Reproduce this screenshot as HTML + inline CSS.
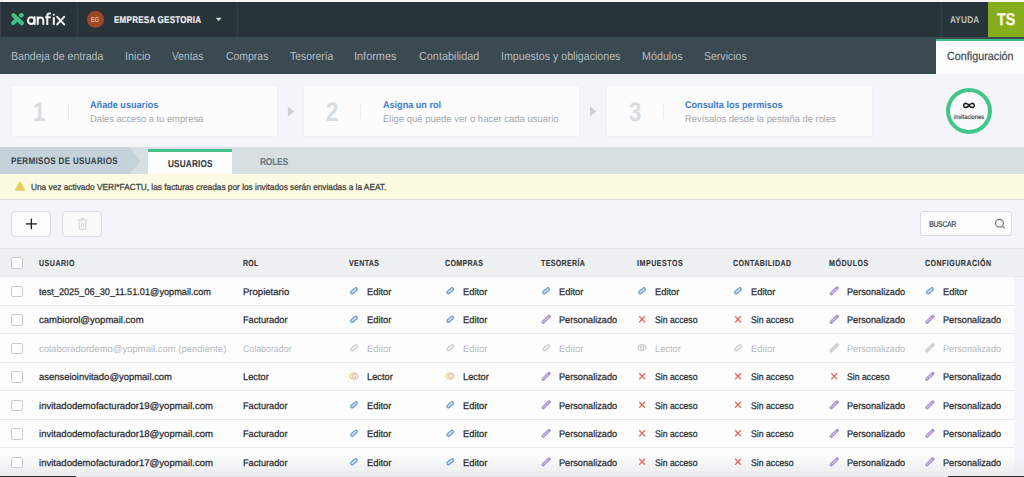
<!DOCTYPE html>
<html><head><meta charset="utf-8"><style>
html,body{margin:0;padding:0;}
body{width:1024px;height:477px;overflow:hidden;position:relative;background:#f4f4f8;font-family:'Liberation Sans', sans-serif;text-rendering:geometricPrecision;}
div{-webkit-text-stroke:0.25px currentColor;}
</style></head><body>
<div style="position:absolute;left:0px;top:0px;width:1024px;height:2px;background:#f6f6f7;"></div>
<div style="position:absolute;left:0px;top:2px;width:1024px;height:34.5px;background:#29333a;"></div>
<div style="position:absolute;left:0px;top:2px;width:1px;height:34.5px;background:#3a4349;"></div>
<svg style="position:absolute;left:0;top:0;overflow:visible" width="1024" height="477" viewBox="0 0 1024 477"><g stroke="#3ec586" stroke-width="4.1" stroke-linecap="round" fill="none"><line x1="13.5" y1="15.2" x2="21.9" y2="23.3"/><line x1="13.1" y1="23.0" x2="17.6" y2="19.0"/></g><circle cx="21.3" cy="15.3" r="2.35" fill="#3ec586"/></svg>
<svg style="position:absolute;left:0;top:0;overflow:visible" width="1024" height="477" viewBox="0 0 1024 477"><g stroke="#f2f4f4" stroke-width="2" fill="none" stroke-linecap="butt"><circle cx="31.25" cy="20.6" r="3.3"/><line x1="34.6" y1="16.3" x2="34.6" y2="24.9"/><path d="M37.7 24.8 V16.4 M37.7 20.2 A2.8 2.8 0 0 1 43.3 20.2 V24.8"/><path d="M47.3 24.9 V15.7 A2.1 2.1 0 0 1 49.4 13.6 H50.9 M45.2 17.3 H50.7"/><line x1="53.8" y1="17.2" x2="53.8" y2="24.8"/><path d="M57.2 16.8 L64.1 24.4 M64.1 16.8 L57.2 24.4" stroke-linecap="round"/></g><circle cx="53.8" cy="14.7" r="1.05" fill="#f2f4f4"/></svg>
<div style="position:absolute;left:77px;top:2px;width:1px;height:34.5px;background:#343e45;"></div>
<div style="position:absolute;left:86.9px;top:11px;width:16.7px;height:16.7px;border-radius:50%;background:#9f4529"></div>
<div style="position:absolute;left:91.20px;top:16px;font-size:7.2px;line-height:7.2px;font-weight:400;color:#f3e4dd;white-space:pre;transform:scaleX(0.7892);transform-origin:0 0;-webkit-text-stroke:0;">EG</div>
<div style="position:absolute;left:113.60px;top:16px;font-size:9.8px;line-height:9.8px;font-weight:700;color:#eef0f1;white-space:pre;letter-spacing:0.295px;transform:scaleX(0.8200);transform-origin:0 0;-webkit-text-stroke:0;-webkit-text-stroke:0.2px currentColor;">EMPRESA GESTORIA</div>
<svg style="position:absolute;left:0;top:0;overflow:visible" width="1024" height="477" viewBox="0 0 1024 477"><path d="M215.6 17.7 L221.7 17.7 L218.65 21.2 Z" fill="#c8ccd0"/></svg>
<div style="position:absolute;left:237px;top:2px;width:1px;height:34.5px;background:#343e45;"></div>
<div style="position:absolute;left:941px;top:2px;width:1px;height:34.5px;background:#343e45;"></div>
<div style="position:absolute;left:949.80px;top:16px;font-size:9.7px;line-height:9.7px;font-weight:700;color:#bcc1c4;white-space:pre;letter-spacing:0.198px;transform:scaleX(0.8500);transform-origin:0 0;-webkit-text-stroke:0;">AYUDA</div>
<div style="position:absolute;left:988px;top:2px;width:36px;height:34.8px;background:#86ad1c;"></div>
<div style="position:absolute;left:997.00px;top:11px;font-size:17px;line-height:17px;font-weight:700;color:#fcf9e2;white-space:pre;transform:scaleX(0.8374);transform-origin:0 0;-webkit-text-stroke:0;-webkit-text-stroke:0.3px currentColor;">TS</div>
<div style="position:absolute;left:0px;top:36.5px;width:1024px;height:37.5px;background:#3b4950;"></div>
<div style="position:absolute;left:10.70px;top:51px;font-size:11.6px;line-height:11.6px;font-weight:400;color:#b4bcc0;white-space:pre;letter-spacing:0.000px;transform:scaleX(0.9129);transform-origin:0 0;-webkit-text-stroke:0;">Bandeja de entrada</div>
<div style="position:absolute;left:125.00px;top:51px;font-size:11.6px;line-height:11.6px;font-weight:400;color:#b4bcc0;white-space:pre;letter-spacing:0.000px;transform:scaleX(0.9380);transform-origin:0 0;-webkit-text-stroke:0;">Inicio</div>
<div style="position:absolute;left:172.30px;top:51px;font-size:11.6px;line-height:11.6px;font-weight:400;color:#b4bcc0;white-space:pre;letter-spacing:0.000px;transform:scaleX(0.8825);transform-origin:0 0;-webkit-text-stroke:0;">Ventas</div>
<div style="position:absolute;left:225.60px;top:51px;font-size:11.6px;line-height:11.6px;font-weight:400;color:#b4bcc0;white-space:pre;letter-spacing:0.000px;transform:scaleX(0.9012);transform-origin:0 0;-webkit-text-stroke:0;">Compras</div>
<div style="position:absolute;left:289.90px;top:51px;font-size:11.6px;line-height:11.6px;font-weight:400;color:#b4bcc0;white-space:pre;letter-spacing:0.000px;transform:scaleX(0.8960);transform-origin:0 0;-webkit-text-stroke:0;">Tesorería</div>
<div style="position:absolute;left:354.40px;top:51px;font-size:11.6px;line-height:11.6px;font-weight:400;color:#b4bcc0;white-space:pre;letter-spacing:0.000px;transform:scaleX(0.9422);transform-origin:0 0;-webkit-text-stroke:0;">Informes</div>
<div style="position:absolute;left:418.70px;top:51px;font-size:11.6px;line-height:11.6px;font-weight:400;color:#b4bcc0;white-space:pre;letter-spacing:0.000px;transform:scaleX(0.9353);transform-origin:0 0;-webkit-text-stroke:0;">Contabilidad</div>
<div style="position:absolute;left:501.10px;top:51px;font-size:11.6px;line-height:11.6px;font-weight:400;color:#b4bcc0;white-space:pre;letter-spacing:0.000px;transform:scaleX(0.9171);transform-origin:0 0;-webkit-text-stroke:0;">Impuestos y obligaciones</div>
<div style="position:absolute;left:642.40px;top:51px;font-size:11.6px;line-height:11.6px;font-weight:400;color:#b4bcc0;white-space:pre;letter-spacing:0.000px;transform:scaleX(0.9263);transform-origin:0 0;-webkit-text-stroke:0;">Módulos</div>
<div style="position:absolute;left:704.30px;top:51px;font-size:11.6px;line-height:11.6px;font-weight:400;color:#b4bcc0;white-space:pre;letter-spacing:0.000px;transform:scaleX(0.9076);transform-origin:0 0;-webkit-text-stroke:0;">Servicios</div>
<div style="position:absolute;left:935.7px;top:38.9px;width:88.3px;height:35.1px;background:#fdfdfd;"></div>
<div style="position:absolute;left:935.7px;top:38.9px;width:88.3px;height:2.6px;background:#3dbe87;"></div>
<div style="position:absolute;left:946.70px;top:51px;font-size:11.7px;line-height:11.7px;font-weight:400;color:#495156;white-space:pre;letter-spacing:0.000px;transform:scaleX(0.9234);transform-origin:0 0;">Configuración</div>
<div style="position:absolute;left:0px;top:74px;width:1024px;height:403px;background:#f5f5f9;"></div>
<div style="position:absolute;left:11.5px;top:86px;width:265.5px;height:50.2px;background:#fcfcfd;border-radius:2px;box-shadow:0 0 0 1px #f1f1f4"></div>
<div style="position:absolute;left:33.00px;top:99px;font-size:27px;line-height:27px;font-weight:700;color:#d7dde1;white-space:pre;transform:scaleX(0.8249);transform-origin:0 0;-webkit-text-stroke:0;">1</div>
<div style="position:absolute;left:67.5px;top:103.5px;height:15px;border-left:1px dotted #d9dde0"></div>
<div style="position:absolute;left:89.70px;top:101px;font-size:9.7px;line-height:9.7px;font-weight:700;color:#3d7bc8;white-space:pre;letter-spacing:0.000px;transform:scaleX(0.9396);transform-origin:0 0;-webkit-text-stroke:0;">Añade usuarios</div>
<div style="position:absolute;left:89.70px;top:115px;font-size:9.7px;line-height:9.7px;font-weight:400;color:#a4a8ac;white-space:pre;letter-spacing:0.000px;transform:scaleX(0.9652);transform-origin:0 0;-webkit-text-stroke:0;">Dales acceso a tu empresa</div>
<div style="position:absolute;left:304.4px;top:86px;width:274.30000000000007px;height:50.2px;background:#fcfcfd;border-radius:2px;box-shadow:0 0 0 1px #f1f1f4"></div>
<div style="position:absolute;left:325.90px;top:99px;font-size:27px;line-height:27px;font-weight:700;color:#d7dde1;white-space:pre;transform:scaleX(0.8249);transform-origin:0 0;-webkit-text-stroke:0;">2</div>
<div style="position:absolute;left:360.4px;top:103.5px;height:15px;border-left:1px dotted #d9dde0"></div>
<div style="position:absolute;left:382.60px;top:101px;font-size:9.7px;line-height:9.7px;font-weight:700;color:#3d7bc8;white-space:pre;letter-spacing:0.000px;transform:scaleX(0.9369);transform-origin:0 0;-webkit-text-stroke:0;">Asigna un rol</div>
<div style="position:absolute;left:382.60px;top:115px;font-size:9.7px;line-height:9.7px;font-weight:400;color:#a4a8ac;white-space:pre;letter-spacing:0.000px;transform:scaleX(0.9786);transform-origin:0 0;-webkit-text-stroke:0;">Elige qué puede ver o hacer cada usuario</div>
<div style="position:absolute;left:607.2px;top:86px;width:264.79999999999995px;height:50.2px;background:#fcfcfd;border-radius:2px;box-shadow:0 0 0 1px #f1f1f4"></div>
<div style="position:absolute;left:628.70px;top:99px;font-size:27px;line-height:27px;font-weight:700;color:#d7dde1;white-space:pre;transform:scaleX(0.8249);transform-origin:0 0;-webkit-text-stroke:0;">3</div>
<div style="position:absolute;left:663.2px;top:103.5px;height:15px;border-left:1px dotted #d9dde0"></div>
<div style="position:absolute;left:685.40px;top:101px;font-size:9.7px;line-height:9.7px;font-weight:700;color:#3d7bc8;white-space:pre;letter-spacing:0.000px;transform:scaleX(0.9383);transform-origin:0 0;-webkit-text-stroke:0;">Consulta los permisos</div>
<div style="position:absolute;left:685.40px;top:115px;font-size:9.7px;line-height:9.7px;font-weight:400;color:#a4a8ac;white-space:pre;letter-spacing:0.000px;transform:scaleX(0.9655);transform-origin:0 0;-webkit-text-stroke:0;">Revísalos desde la pestaña de roles</div>
<svg style="position:absolute;left:0;top:0;overflow:visible" width="1024" height="477" viewBox="0 0 1024 477"><path d="M287.9 106.4 L294.2 111.5 L287.9 116.6 Z" fill="#cbd0d4"/><path d="M590 106.4 L596.3 111.5 L590 116.6 Z" fill="#cbd0d4"/></svg>
<div style="position:absolute;left:945.7px;top:87.8px;width:38.5px;height:38.3px;border:4px solid #40c68a;border-radius:50%;background:#fafafc"></div>
<svg style="position:absolute;left:0;top:0;overflow:visible" width="1024" height="477" viewBox="0 0 1024 477"><path d="M969 105.4 C968 103.2 963.7 102.3 963.7 105.4 C963.7 108.5 968 107.6 969 105.4 C970 103.2 974.3 102.3 974.3 105.4 C974.3 108.5 970 107.6 969 105.4 Z" fill="none" stroke="#1e1e1e" stroke-width="1.55"/></svg>
<div style="position:absolute;left:953.90px;top:115px;font-size:6.5px;line-height:6.5px;font-weight:400;color:#222;white-space:pre;transform:scaleX(0.8832);transform-origin:0 0;-webkit-text-stroke:0.1px currentColor;">invitaciones</div>
<div style="position:absolute;left:0px;top:147.3px;width:1024px;height:26.7px;background:#d8dfe3;"></div>
<svg style="position:absolute;left:0;top:0;overflow:visible" width="1024" height="477" viewBox="0 0 1024 477"><path d="M0 147.3 L129.7 147.3 L140.6 160.65 L129.7 174 L0 174 Z" fill="#c5d2d9"/></svg>
<div style="position:absolute;left:10.90px;top:157px;font-size:9.5px;line-height:9.5px;font-weight:700;color:#343e45;white-space:pre;letter-spacing:0.349px;transform:scaleX(0.8500);transform-origin:0 0;-webkit-text-stroke:0;">PERMISOS DE USUARIOS</div>
<div style="position:absolute;left:147.8px;top:149.4px;width:84.1px;height:24.6px;background:#fdfdfd;"></div>
<div style="position:absolute;left:147.8px;top:149.4px;width:84.1px;height:2.3px;background:#44c08c;"></div>
<div style="position:absolute;left:167.80px;top:160px;font-size:10px;line-height:10px;font-weight:700;color:#30383e;white-space:pre;letter-spacing:0.210px;transform:scaleX(0.8200);transform-origin:0 0;-webkit-text-stroke:0;-webkit-text-stroke:0.1px currentColor;">USUARIOS</div>
<div style="position:absolute;left:260.00px;top:158px;font-size:10px;line-height:10px;font-weight:700;color:#6e7b84;white-space:pre;letter-spacing:-0.349px;transform:scaleX(0.8500);transform-origin:0 0;-webkit-text-stroke:0;-webkit-text-stroke:0.15px currentColor;">ROLES</div>
<div style="position:absolute;left:0px;top:174px;width:1024px;height:25px;background:#fcfbe2;"></div>
<div style="position:absolute;left:0px;top:198.5px;width:1024px;height:1px;background:#dfded3;"></div>
<svg style="position:absolute;left:0;top:0;overflow:visible" width="1024" height="477" viewBox="0 0 1024 477"><path d="M19.95 182.7 L23.8 189.8 L16.1 189.8 Z" fill="#e6cc58" stroke="#e6cc58" stroke-width="2" stroke-linejoin="round"/></svg>
<div style="position:absolute;left:31.25px;top:183px;font-size:8.8px;line-height:8.8px;font-weight:400;color:#3a3a3a;white-space:pre;transform:scaleX(0.9429);transform-origin:0 0;">Una vez activado VERI*FACTU, las facturas creadas por los invitados serán enviadas a la AEAT.</div>
<div style="position:absolute;left:11.3px;top:211px;width:37.4px;height:23.7px;border:1px solid #dcdcdf;border-radius:4px;background:#fdfdfd"></div>
<svg style="position:absolute;left:0;top:0;overflow:visible" width="1024" height="477" viewBox="0 0 1024 477"><g stroke="#222" stroke-width="1.35"><line x1="25.8" y1="223.9" x2="36.9" y2="223.9"/><line x1="31.35" y1="218.6" x2="31.35" y2="229.2"/></g></svg>
<div style="position:absolute;left:62.3px;top:211px;width:37.8px;height:23.7px;border:1px solid #dcdcdf;border-radius:4px;background:#fbfbfc"></div>
<svg style="position:absolute;left:0;top:0;overflow:visible" width="1024" height="477" viewBox="0 0 1024 477"><g fill="none" stroke="#d9d9dc" stroke-width="1.2"><line x1="77.5" y1="220.1" x2="87.5" y2="220.1"/><path d="M80.6 219.9 Q80.8 218.3 82.5 218.3 Q84.2 218.3 84.4 219.9"/><path d="M78.9 220.6 L79.3 228.2 Q79.4 229.3 80.6 229.3 L84.4 229.3 Q85.6 229.3 85.7 228.2 L86.1 220.6"/><line x1="81.4" y1="222.6" x2="81.4" y2="227.2"/><line x1="83.6" y1="222.6" x2="83.6" y2="227.2"/></g></svg>
<div style="position:absolute;left:919.5px;top:211.3px;width:90.8px;height:23.2px;border:1px solid #dcdcdf;border-radius:3px;background:#fdfdfd"></div>
<div style="position:absolute;left:929.20px;top:220px;font-size:8.4px;line-height:8.4px;font-weight:700;color:#5a5e62;white-space:pre;letter-spacing:-0.719px;transform:scaleX(0.8500);transform-origin:0 0;-webkit-text-stroke:0;">BUSCAR</div>
<svg style="position:absolute;left:0;top:0;overflow:visible" width="1024" height="477" viewBox="0 0 1024 477"><g fill="none" stroke="#74797d" stroke-width="1.2"><circle cx="999.5" cy="223.2" r="3.9"/><line x1="1002.4" y1="226.1" x2="1004.7" y2="228.4"/></g></svg>
<div style="position:absolute;left:0px;top:248px;width:1024px;height:28.5px;background:#eff0f2;"></div>
<div style="position:absolute;left:0px;top:248px;width:1024px;height:1px;background:#e6e7ea;"></div>
<div style="position:absolute;left:11.2px;top:257.3px;width:9.6px;height:9.6px;border:1px solid #cbcbcd;border-radius:2px;background:#fff"></div>
<div style="position:absolute;left:39.40px;top:259px;font-size:8.8px;line-height:8.8px;font-weight:700;color:#34383c;white-space:pre;letter-spacing:0.633px;transform:scaleX(0.8000);transform-origin:0 0;-webkit-text-stroke:0;-webkit-text-stroke:0.15px currentColor;">USUARIO</div>
<div style="position:absolute;left:242.70px;top:259px;font-size:8.8px;line-height:8.8px;font-weight:700;color:#34383c;white-space:pre;letter-spacing:0.211px;transform:scaleX(0.8000);transform-origin:0 0;-webkit-text-stroke:0;-webkit-text-stroke:0.15px currentColor;">ROL</div>
<div style="position:absolute;left:348.60px;top:259px;font-size:8.8px;line-height:8.8px;font-weight:700;color:#34383c;white-space:pre;letter-spacing:0.494px;transform:scaleX(0.8000);transform-origin:0 0;-webkit-text-stroke:0;-webkit-text-stroke:0.15px currentColor;">VENTAS</div>
<div style="position:absolute;left:444.80px;top:259px;font-size:8.8px;line-height:8.8px;font-weight:700;color:#34383c;white-space:pre;letter-spacing:0.401px;transform:scaleX(0.8000);transform-origin:0 0;-webkit-text-stroke:0;-webkit-text-stroke:0.15px currentColor;">COMPRAS</div>
<div style="position:absolute;left:540.70px;top:259px;font-size:8.8px;line-height:8.8px;font-weight:700;color:#34383c;white-space:pre;letter-spacing:0.443px;transform:scaleX(0.8000);transform-origin:0 0;-webkit-text-stroke:0;-webkit-text-stroke:0.15px currentColor;">TESORERÍA</div>
<div style="position:absolute;left:636.70px;top:259px;font-size:8.8px;line-height:8.8px;font-weight:700;color:#34383c;white-space:pre;letter-spacing:0.684px;transform:scaleX(0.8000);transform-origin:0 0;-webkit-text-stroke:0;-webkit-text-stroke:0.15px currentColor;">IMPUESTOS</div>
<div style="position:absolute;left:732.60px;top:259px;font-size:8.8px;line-height:8.8px;font-weight:700;color:#34383c;white-space:pre;letter-spacing:0.575px;transform:scaleX(0.8000);transform-origin:0 0;-webkit-text-stroke:0;-webkit-text-stroke:0.15px currentColor;">CONTABILIDAD</div>
<div style="position:absolute;left:828.80px;top:259px;font-size:8.8px;line-height:8.8px;font-weight:700;color:#34383c;white-space:pre;letter-spacing:0.693px;transform:scaleX(0.8000);transform-origin:0 0;-webkit-text-stroke:0;-webkit-text-stroke:0.15px currentColor;">MÓDULOS</div>
<div style="position:absolute;left:924.50px;top:259px;font-size:8.8px;line-height:8.8px;font-weight:700;color:#34383c;white-space:pre;letter-spacing:0.603px;transform:scaleX(0.8000);transform-origin:0 0;-webkit-text-stroke:0;-webkit-text-stroke:0.15px currentColor;">CONFIGURACIÓN</div>
<div style="position:absolute;left:0px;top:276.5px;width:1014.3px;height:28.5px;background:#fdfdfd;"></div>
<div style="position:absolute;left:0px;top:305.0px;width:1014.3px;height:28.5px;background:#fdfdfd;"></div>
<div style="position:absolute;left:0px;top:333.5px;width:1014.3px;height:28.5px;background:#fdfdfd;"></div>
<div style="position:absolute;left:0px;top:362.0px;width:1014.3px;height:28.5px;background:#fdfdfd;"></div>
<div style="position:absolute;left:0px;top:390.5px;width:1014.3px;height:28.5px;background:#fdfdfd;"></div>
<div style="position:absolute;left:0px;top:419.0px;width:1014.3px;height:28.5px;background:#fdfdfd;"></div>
<div style="position:absolute;left:0px;top:447.5px;width:1014.3px;height:28.5px;background:#fdfdfd;"></div>
<div style="position:absolute;left:0px;top:276px;width:1024px;height:1px;background:#e7e8eb;"></div>
<div style="position:absolute;left:0px;top:305px;width:1014.3px;height:1px;background:#e7e8eb;"></div>
<div style="position:absolute;left:0px;top:333px;width:1014.3px;height:1px;background:#e7e8eb;"></div>
<div style="position:absolute;left:0px;top:362px;width:1014.3px;height:1px;background:#e7e8eb;"></div>
<div style="position:absolute;left:0px;top:390px;width:1014.3px;height:1px;background:#e7e8eb;"></div>
<div style="position:absolute;left:0px;top:419px;width:1014.3px;height:1px;background:#e7e8eb;"></div>
<div style="position:absolute;left:0px;top:447px;width:1014.3px;height:1px;background:#e7e8eb;"></div>
<div style="position:absolute;left:0;top:454px;width:1024px;height:23px;background:linear-gradient(to bottom, rgba(228,229,233,0) 0%, rgba(228,229,233,0.75) 100%)"></div>
<div style="position:absolute;left:0px;top:476px;width:1024px;height:1px;background:#e2e2e5;"></div>
<div style="position:absolute;left:11.2px;top:285.7px;width:9.6px;height:9.6px;border:1px solid #cbcbcd;border-radius:2px;background:#fff"></div>
<div style="position:absolute;left:39.20px;top:288px;font-size:9.6px;line-height:9.6px;font-weight:400;color:#2b2c2e;white-space:pre;letter-spacing:0.000px;transform:scaleX(0.9565);transform-origin:0 0;">test_2025_06_30_11.51.01@yopmail.com</div>
<div style="position:absolute;left:242.70px;top:288px;font-size:9.6px;line-height:9.6px;font-weight:400;color:#2b2c2e;white-space:pre;letter-spacing:0.000px;transform:scaleX(0.9956);transform-origin:0 0;">Propietario</div>
<div style="position:absolute;left:367.10px;top:288px;font-size:9.6px;line-height:9.6px;font-weight:400;color:#2b2c2e;white-space:pre;letter-spacing:0.000px;transform:scaleX(0.9736);transform-origin:0 0;">Editor</div>
<div style="position:absolute;left:463.30px;top:288px;font-size:9.6px;line-height:9.6px;font-weight:400;color:#2b2c2e;white-space:pre;letter-spacing:0.000px;transform:scaleX(0.9736);transform-origin:0 0;">Editor</div>
<div style="position:absolute;left:559.20px;top:288px;font-size:9.6px;line-height:9.6px;font-weight:400;color:#2b2c2e;white-space:pre;letter-spacing:0.000px;transform:scaleX(0.9736);transform-origin:0 0;">Editor</div>
<div style="position:absolute;left:655.20px;top:288px;font-size:9.6px;line-height:9.6px;font-weight:400;color:#2b2c2e;white-space:pre;letter-spacing:0.000px;transform:scaleX(0.9736);transform-origin:0 0;">Editor</div>
<div style="position:absolute;left:751.10px;top:288px;font-size:9.6px;line-height:9.6px;font-weight:400;color:#2b2c2e;white-space:pre;letter-spacing:0.000px;transform:scaleX(0.9736);transform-origin:0 0;">Editor</div>
<div style="position:absolute;left:847.30px;top:288px;font-size:9.6px;line-height:9.6px;font-weight:400;color:#2b2c2e;white-space:pre;letter-spacing:0.000px;transform:scaleX(0.9554);transform-origin:0 0;">Personalizado</div>
<div style="position:absolute;left:943.00px;top:288px;font-size:9.6px;line-height:9.6px;font-weight:400;color:#2b2c2e;white-space:pre;letter-spacing:0.000px;transform:scaleX(0.9736);transform-origin:0 0;">Editor</div>
<div style="position:absolute;left:11.2px;top:314.2px;width:9.6px;height:9.6px;border:1px solid #cbcbcd;border-radius:2px;background:#fff"></div>
<div style="position:absolute;left:39.20px;top:316px;font-size:9.6px;line-height:9.6px;font-weight:400;color:#2b2c2e;white-space:pre;letter-spacing:0.000px;transform:scaleX(0.9944);transform-origin:0 0;">cambiorol@yopmail.com</div>
<div style="position:absolute;left:242.70px;top:316px;font-size:9.6px;line-height:9.6px;font-weight:400;color:#2b2c2e;white-space:pre;letter-spacing:0.000px;transform:scaleX(0.9592);transform-origin:0 0;">Facturador</div>
<div style="position:absolute;left:367.10px;top:316px;font-size:9.6px;line-height:9.6px;font-weight:400;color:#2b2c2e;white-space:pre;letter-spacing:0.000px;transform:scaleX(0.9736);transform-origin:0 0;">Editor</div>
<div style="position:absolute;left:463.30px;top:316px;font-size:9.6px;line-height:9.6px;font-weight:400;color:#2b2c2e;white-space:pre;letter-spacing:0.000px;transform:scaleX(0.9736);transform-origin:0 0;">Editor</div>
<div style="position:absolute;left:559.20px;top:316px;font-size:9.6px;line-height:9.6px;font-weight:400;color:#2b2c2e;white-space:pre;letter-spacing:0.000px;transform:scaleX(0.9554);transform-origin:0 0;">Personalizado</div>
<div style="position:absolute;left:655.20px;top:316px;font-size:9.6px;line-height:9.6px;font-weight:400;color:#2b2c2e;white-space:pre;letter-spacing:0.000px;transform:scaleX(0.9055);transform-origin:0 0;">Sin acceso</div>
<div style="position:absolute;left:751.10px;top:316px;font-size:9.6px;line-height:9.6px;font-weight:400;color:#2b2c2e;white-space:pre;letter-spacing:0.000px;transform:scaleX(0.9055);transform-origin:0 0;">Sin acceso</div>
<div style="position:absolute;left:847.30px;top:316px;font-size:9.6px;line-height:9.6px;font-weight:400;color:#2b2c2e;white-space:pre;letter-spacing:0.000px;transform:scaleX(0.9554);transform-origin:0 0;">Personalizado</div>
<div style="position:absolute;left:943.00px;top:316px;font-size:9.6px;line-height:9.6px;font-weight:400;color:#2b2c2e;white-space:pre;letter-spacing:0.000px;transform:scaleX(0.9554);transform-origin:0 0;">Personalizado</div>
<div style="position:absolute;left:11.2px;top:342.7px;width:9.6px;height:9.6px;border:1px solid #cbcbcd;border-radius:2px;background:#fff"></div>
<div style="position:absolute;left:39.20px;top:345px;font-size:9.6px;line-height:9.6px;font-weight:400;color:#b8bbbf;white-space:pre;letter-spacing:0.000px;transform:scaleX(0.9886);transform-origin:0 0;-webkit-text-stroke:0;">colaboradordemo@yopmail.com (pendiente)</div>
<div style="position:absolute;left:242.70px;top:345px;font-size:9.6px;line-height:9.6px;font-weight:400;color:#b8bbbf;white-space:pre;letter-spacing:0.000px;transform:scaleX(0.9183);transform-origin:0 0;-webkit-text-stroke:0;">Colaborador</div>
<div style="position:absolute;left:367.10px;top:345px;font-size:9.6px;line-height:9.6px;font-weight:400;color:#b8bbbf;white-space:pre;letter-spacing:0.000px;transform:scaleX(0.9736);transform-origin:0 0;-webkit-text-stroke:0;">Editor</div>
<div style="position:absolute;left:463.30px;top:345px;font-size:9.6px;line-height:9.6px;font-weight:400;color:#b8bbbf;white-space:pre;letter-spacing:0.000px;transform:scaleX(0.9736);transform-origin:0 0;-webkit-text-stroke:0;">Editor</div>
<div style="position:absolute;left:559.20px;top:345px;font-size:9.6px;line-height:9.6px;font-weight:400;color:#b8bbbf;white-space:pre;letter-spacing:0.000px;transform:scaleX(0.9736);transform-origin:0 0;-webkit-text-stroke:0;">Editor</div>
<div style="position:absolute;left:655.20px;top:345px;font-size:9.6px;line-height:9.6px;font-weight:400;color:#b8bbbf;white-space:pre;letter-spacing:0.000px;transform:scaleX(0.9673);transform-origin:0 0;-webkit-text-stroke:0;">Lector</div>
<div style="position:absolute;left:751.10px;top:345px;font-size:9.6px;line-height:9.6px;font-weight:400;color:#b8bbbf;white-space:pre;letter-spacing:0.000px;transform:scaleX(0.9736);transform-origin:0 0;-webkit-text-stroke:0;">Editor</div>
<div style="position:absolute;left:847.30px;top:345px;font-size:9.6px;line-height:9.6px;font-weight:400;color:#b8bbbf;white-space:pre;letter-spacing:0.000px;transform:scaleX(0.9554);transform-origin:0 0;-webkit-text-stroke:0;">Personalizado</div>
<div style="position:absolute;left:943.00px;top:345px;font-size:9.6px;line-height:9.6px;font-weight:400;color:#b8bbbf;white-space:pre;letter-spacing:0.000px;transform:scaleX(0.9554);transform-origin:0 0;-webkit-text-stroke:0;">Personalizado</div>
<div style="position:absolute;left:11.2px;top:371.2px;width:9.6px;height:9.6px;border:1px solid #cbcbcd;border-radius:2px;background:#fff"></div>
<div style="position:absolute;left:39.20px;top:373px;font-size:9.6px;line-height:9.6px;font-weight:400;color:#2b2c2e;white-space:pre;letter-spacing:0.000px;transform:scaleX(0.9847);transform-origin:0 0;">asenseioinvitado@yopmail.com</div>
<div style="position:absolute;left:242.70px;top:373px;font-size:9.6px;line-height:9.6px;font-weight:400;color:#2b2c2e;white-space:pre;letter-spacing:0.000px;transform:scaleX(0.9673);transform-origin:0 0;">Lector</div>
<div style="position:absolute;left:367.10px;top:373px;font-size:9.6px;line-height:9.6px;font-weight:400;color:#2b2c2e;white-space:pre;letter-spacing:0.000px;transform:scaleX(0.9673);transform-origin:0 0;">Lector</div>
<div style="position:absolute;left:463.30px;top:373px;font-size:9.6px;line-height:9.6px;font-weight:400;color:#2b2c2e;white-space:pre;letter-spacing:0.000px;transform:scaleX(0.9673);transform-origin:0 0;">Lector</div>
<div style="position:absolute;left:559.20px;top:373px;font-size:9.6px;line-height:9.6px;font-weight:400;color:#2b2c2e;white-space:pre;letter-spacing:0.000px;transform:scaleX(0.9554);transform-origin:0 0;">Personalizado</div>
<div style="position:absolute;left:655.20px;top:373px;font-size:9.6px;line-height:9.6px;font-weight:400;color:#2b2c2e;white-space:pre;letter-spacing:0.000px;transform:scaleX(0.9055);transform-origin:0 0;">Sin acceso</div>
<div style="position:absolute;left:751.10px;top:373px;font-size:9.6px;line-height:9.6px;font-weight:400;color:#2b2c2e;white-space:pre;letter-spacing:0.000px;transform:scaleX(0.9055);transform-origin:0 0;">Sin acceso</div>
<div style="position:absolute;left:847.30px;top:373px;font-size:9.6px;line-height:9.6px;font-weight:400;color:#2b2c2e;white-space:pre;letter-spacing:0.000px;transform:scaleX(0.9055);transform-origin:0 0;">Sin acceso</div>
<div style="position:absolute;left:943.00px;top:373px;font-size:9.6px;line-height:9.6px;font-weight:400;color:#2b2c2e;white-space:pre;letter-spacing:0.000px;transform:scaleX(0.9554);transform-origin:0 0;">Personalizado</div>
<div style="position:absolute;left:11.2px;top:399.7px;width:9.6px;height:9.6px;border:1px solid #cbcbcd;border-radius:2px;background:#fff"></div>
<div style="position:absolute;left:39.20px;top:402px;font-size:9.6px;line-height:9.6px;font-weight:400;color:#2b2c2e;white-space:pre;letter-spacing:0.000px;transform:scaleX(0.9970);transform-origin:0 0;">invitadodemofacturador19@yopmail.com</div>
<div style="position:absolute;left:242.70px;top:402px;font-size:9.6px;line-height:9.6px;font-weight:400;color:#2b2c2e;white-space:pre;letter-spacing:0.000px;transform:scaleX(0.9592);transform-origin:0 0;">Facturador</div>
<div style="position:absolute;left:367.10px;top:402px;font-size:9.6px;line-height:9.6px;font-weight:400;color:#2b2c2e;white-space:pre;letter-spacing:0.000px;transform:scaleX(0.9736);transform-origin:0 0;">Editor</div>
<div style="position:absolute;left:463.30px;top:402px;font-size:9.6px;line-height:9.6px;font-weight:400;color:#2b2c2e;white-space:pre;letter-spacing:0.000px;transform:scaleX(0.9736);transform-origin:0 0;">Editor</div>
<div style="position:absolute;left:559.20px;top:402px;font-size:9.6px;line-height:9.6px;font-weight:400;color:#2b2c2e;white-space:pre;letter-spacing:0.000px;transform:scaleX(0.9554);transform-origin:0 0;">Personalizado</div>
<div style="position:absolute;left:655.20px;top:402px;font-size:9.6px;line-height:9.6px;font-weight:400;color:#2b2c2e;white-space:pre;letter-spacing:0.000px;transform:scaleX(0.9055);transform-origin:0 0;">Sin acceso</div>
<div style="position:absolute;left:751.10px;top:402px;font-size:9.6px;line-height:9.6px;font-weight:400;color:#2b2c2e;white-space:pre;letter-spacing:0.000px;transform:scaleX(0.9055);transform-origin:0 0;">Sin acceso</div>
<div style="position:absolute;left:847.30px;top:402px;font-size:9.6px;line-height:9.6px;font-weight:400;color:#2b2c2e;white-space:pre;letter-spacing:0.000px;transform:scaleX(0.9554);transform-origin:0 0;">Personalizado</div>
<div style="position:absolute;left:943.00px;top:402px;font-size:9.6px;line-height:9.6px;font-weight:400;color:#2b2c2e;white-space:pre;letter-spacing:0.000px;transform:scaleX(0.9554);transform-origin:0 0;">Personalizado</div>
<div style="position:absolute;left:11.2px;top:428.2px;width:9.6px;height:9.6px;border:1px solid #cbcbcd;border-radius:2px;background:#fff"></div>
<div style="position:absolute;left:39.20px;top:430px;font-size:9.6px;line-height:9.6px;font-weight:400;color:#2b2c2e;white-space:pre;letter-spacing:0.000px;transform:scaleX(0.9970);transform-origin:0 0;">invitadodemofacturador18@yopmail.com</div>
<div style="position:absolute;left:242.70px;top:430px;font-size:9.6px;line-height:9.6px;font-weight:400;color:#2b2c2e;white-space:pre;letter-spacing:0.000px;transform:scaleX(0.9592);transform-origin:0 0;">Facturador</div>
<div style="position:absolute;left:367.10px;top:430px;font-size:9.6px;line-height:9.6px;font-weight:400;color:#2b2c2e;white-space:pre;letter-spacing:0.000px;transform:scaleX(0.9736);transform-origin:0 0;">Editor</div>
<div style="position:absolute;left:463.30px;top:430px;font-size:9.6px;line-height:9.6px;font-weight:400;color:#2b2c2e;white-space:pre;letter-spacing:0.000px;transform:scaleX(0.9736);transform-origin:0 0;">Editor</div>
<div style="position:absolute;left:559.20px;top:430px;font-size:9.6px;line-height:9.6px;font-weight:400;color:#2b2c2e;white-space:pre;letter-spacing:0.000px;transform:scaleX(0.9554);transform-origin:0 0;">Personalizado</div>
<div style="position:absolute;left:655.20px;top:430px;font-size:9.6px;line-height:9.6px;font-weight:400;color:#2b2c2e;white-space:pre;letter-spacing:0.000px;transform:scaleX(0.9055);transform-origin:0 0;">Sin acceso</div>
<div style="position:absolute;left:751.10px;top:430px;font-size:9.6px;line-height:9.6px;font-weight:400;color:#2b2c2e;white-space:pre;letter-spacing:0.000px;transform:scaleX(0.9055);transform-origin:0 0;">Sin acceso</div>
<div style="position:absolute;left:847.30px;top:430px;font-size:9.6px;line-height:9.6px;font-weight:400;color:#2b2c2e;white-space:pre;letter-spacing:0.000px;transform:scaleX(0.9554);transform-origin:0 0;">Personalizado</div>
<div style="position:absolute;left:943.00px;top:430px;font-size:9.6px;line-height:9.6px;font-weight:400;color:#2b2c2e;white-space:pre;letter-spacing:0.000px;transform:scaleX(0.9554);transform-origin:0 0;">Personalizado</div>
<div style="position:absolute;left:11.2px;top:456.7px;width:9.6px;height:9.6px;border:1px solid #cbcbcd;border-radius:2px;background:#fff"></div>
<div style="position:absolute;left:39.20px;top:459px;font-size:9.6px;line-height:9.6px;font-weight:400;color:#2b2c2e;white-space:pre;letter-spacing:0.000px;transform:scaleX(0.9970);transform-origin:0 0;">invitadodemofacturador17@yopmail.com</div>
<div style="position:absolute;left:242.70px;top:459px;font-size:9.6px;line-height:9.6px;font-weight:400;color:#2b2c2e;white-space:pre;letter-spacing:0.000px;transform:scaleX(0.9592);transform-origin:0 0;">Facturador</div>
<div style="position:absolute;left:367.10px;top:459px;font-size:9.6px;line-height:9.6px;font-weight:400;color:#2b2c2e;white-space:pre;letter-spacing:0.000px;transform:scaleX(0.9736);transform-origin:0 0;">Editor</div>
<div style="position:absolute;left:463.30px;top:459px;font-size:9.6px;line-height:9.6px;font-weight:400;color:#2b2c2e;white-space:pre;letter-spacing:0.000px;transform:scaleX(0.9736);transform-origin:0 0;">Editor</div>
<div style="position:absolute;left:559.20px;top:459px;font-size:9.6px;line-height:9.6px;font-weight:400;color:#2b2c2e;white-space:pre;letter-spacing:0.000px;transform:scaleX(0.9554);transform-origin:0 0;">Personalizado</div>
<div style="position:absolute;left:655.20px;top:459px;font-size:9.6px;line-height:9.6px;font-weight:400;color:#2b2c2e;white-space:pre;letter-spacing:0.000px;transform:scaleX(0.9055);transform-origin:0 0;">Sin acceso</div>
<div style="position:absolute;left:751.10px;top:459px;font-size:9.6px;line-height:9.6px;font-weight:400;color:#2b2c2e;white-space:pre;letter-spacing:0.000px;transform:scaleX(0.9055);transform-origin:0 0;">Sin acceso</div>
<div style="position:absolute;left:847.30px;top:459px;font-size:9.6px;line-height:9.6px;font-weight:400;color:#2b2c2e;white-space:pre;letter-spacing:0.000px;transform:scaleX(0.9554);transform-origin:0 0;">Personalizado</div>
<div style="position:absolute;left:943.00px;top:459px;font-size:9.6px;line-height:9.6px;font-weight:400;color:#2b2c2e;white-space:pre;letter-spacing:0.000px;transform:scaleX(0.9554);transform-origin:0 0;">Personalizado</div>
<svg style="position:absolute;left:0;top:0;overflow:visible" width="1024" height="477" viewBox="0 0 1024 477"><line x1="352.1" y1="292.40000000000003" x2="355.9" y2="289.2" stroke="#6597d8" stroke-width="4" stroke-linecap="round"/><line x1="352.1" y1="292.40000000000003" x2="355.9" y2="289.2" stroke="#d3e2f5" stroke-width="1.7" stroke-linecap="round"/><line x1="448.3" y1="292.40000000000003" x2="452.09999999999997" y2="289.2" stroke="#6597d8" stroke-width="4" stroke-linecap="round"/><line x1="448.3" y1="292.40000000000003" x2="452.09999999999997" y2="289.2" stroke="#d3e2f5" stroke-width="1.7" stroke-linecap="round"/><line x1="544.2" y1="292.40000000000003" x2="548.0" y2="289.2" stroke="#6597d8" stroke-width="4" stroke-linecap="round"/><line x1="544.2" y1="292.40000000000003" x2="548.0" y2="289.2" stroke="#d3e2f5" stroke-width="1.7" stroke-linecap="round"/><line x1="640.2" y1="292.40000000000003" x2="644.0" y2="289.2" stroke="#6597d8" stroke-width="4" stroke-linecap="round"/><line x1="640.2" y1="292.40000000000003" x2="644.0" y2="289.2" stroke="#d3e2f5" stroke-width="1.7" stroke-linecap="round"/><line x1="736.1" y1="292.40000000000003" x2="739.9" y2="289.2" stroke="#6597d8" stroke-width="4" stroke-linecap="round"/><line x1="736.1" y1="292.40000000000003" x2="739.9" y2="289.2" stroke="#d3e2f5" stroke-width="1.7" stroke-linecap="round"/><line x1="831.1999999999999" y1="293.7" x2="837.1999999999999" y2="287.90000000000003" stroke="#ab92d3" stroke-width="3.3" stroke-linecap="round"/><line x1="831.5999999999999" y1="293.3" x2="836.8" y2="288.3" stroke="#ece5f6" stroke-width="1.1" stroke-dasharray="1.3 1.1"/><line x1="836.5999999999999" y1="286.90000000000003" x2="838.0999999999999" y2="288.40000000000003" stroke="#ab92d3" stroke-width="0.7" opacity="0.6"/><line x1="928.0" y1="292.40000000000003" x2="931.8" y2="289.2" stroke="#6597d8" stroke-width="4" stroke-linecap="round"/><line x1="928.0" y1="292.40000000000003" x2="931.8" y2="289.2" stroke="#d3e2f5" stroke-width="1.7" stroke-linecap="round"/><line x1="352.1" y1="320.90000000000003" x2="355.9" y2="317.7" stroke="#6597d8" stroke-width="4" stroke-linecap="round"/><line x1="352.1" y1="320.90000000000003" x2="355.9" y2="317.7" stroke="#d3e2f5" stroke-width="1.7" stroke-linecap="round"/><line x1="448.3" y1="320.90000000000003" x2="452.09999999999997" y2="317.7" stroke="#6597d8" stroke-width="4" stroke-linecap="round"/><line x1="448.3" y1="320.90000000000003" x2="452.09999999999997" y2="317.7" stroke="#d3e2f5" stroke-width="1.7" stroke-linecap="round"/><line x1="543.1" y1="322.2" x2="549.1" y2="316.40000000000003" stroke="#ab92d3" stroke-width="3.3" stroke-linecap="round"/><line x1="543.5" y1="321.8" x2="548.7" y2="316.8" stroke="#ece5f6" stroke-width="1.1" stroke-dasharray="1.3 1.1"/><line x1="548.5" y1="315.40000000000003" x2="550.0" y2="316.90000000000003" stroke="#ab92d3" stroke-width="0.7" opacity="0.6"/><g stroke="#df6a5c" stroke-width="1.25"><line x1="639.2" y1="316.3" x2="645.0" y2="322.2"/><line x1="645.0" y1="316.3" x2="639.2" y2="322.2"/></g><g stroke="#df6a5c" stroke-width="1.25"><line x1="735.1" y1="316.3" x2="740.9" y2="322.2"/><line x1="740.9" y1="316.3" x2="735.1" y2="322.2"/></g><line x1="831.1999999999999" y1="322.2" x2="837.1999999999999" y2="316.40000000000003" stroke="#ab92d3" stroke-width="3.3" stroke-linecap="round"/><line x1="831.5999999999999" y1="321.8" x2="836.8" y2="316.8" stroke="#ece5f6" stroke-width="1.1" stroke-dasharray="1.3 1.1"/><line x1="836.5999999999999" y1="315.40000000000003" x2="838.0999999999999" y2="316.90000000000003" stroke="#ab92d3" stroke-width="0.7" opacity="0.6"/><line x1="926.9" y1="322.2" x2="932.9" y2="316.40000000000003" stroke="#ab92d3" stroke-width="3.3" stroke-linecap="round"/><line x1="927.3" y1="321.8" x2="932.5" y2="316.8" stroke="#ece5f6" stroke-width="1.1" stroke-dasharray="1.3 1.1"/><line x1="932.3" y1="315.40000000000003" x2="933.8" y2="316.90000000000003" stroke="#ab92d3" stroke-width="0.7" opacity="0.6"/><line x1="352.1" y1="349.40000000000003" x2="355.9" y2="346.2" stroke="#c8cacd" stroke-width="4" stroke-linecap="round"/><line x1="352.1" y1="349.40000000000003" x2="355.9" y2="346.2" stroke="#f4f4f5" stroke-width="1.7" stroke-linecap="round"/><line x1="448.3" y1="349.40000000000003" x2="452.09999999999997" y2="346.2" stroke="#c8cacd" stroke-width="4" stroke-linecap="round"/><line x1="448.3" y1="349.40000000000003" x2="452.09999999999997" y2="346.2" stroke="#f4f4f5" stroke-width="1.7" stroke-linecap="round"/><line x1="544.2" y1="349.40000000000003" x2="548.0" y2="346.2" stroke="#c8cacd" stroke-width="4" stroke-linecap="round"/><line x1="544.2" y1="349.40000000000003" x2="548.0" y2="346.2" stroke="#f4f4f5" stroke-width="1.7" stroke-linecap="round"/><g fill="none" stroke="#c8cacd" stroke-width="1.2"><ellipse cx="642.1" cy="347.7" rx="3.9" ry="3.1"/><circle cx="642.1" cy="347.7" r="1.7"/></g><line x1="736.1" y1="349.40000000000003" x2="739.9" y2="346.2" stroke="#c8cacd" stroke-width="4" stroke-linecap="round"/><line x1="736.1" y1="349.40000000000003" x2="739.9" y2="346.2" stroke="#f4f4f5" stroke-width="1.7" stroke-linecap="round"/><line x1="831.1999999999999" y1="350.7" x2="837.1999999999999" y2="344.90000000000003" stroke="#c8cacd" stroke-width="3.3" stroke-linecap="round"/><line x1="831.5999999999999" y1="350.3" x2="836.8" y2="345.3" stroke="#f2f2f3" stroke-width="1.1" stroke-dasharray="1.3 1.1"/><line x1="836.5999999999999" y1="343.90000000000003" x2="838.0999999999999" y2="345.40000000000003" stroke="#c8cacd" stroke-width="0.7" opacity="0.6"/><line x1="926.9" y1="350.7" x2="932.9" y2="344.90000000000003" stroke="#c8cacd" stroke-width="3.3" stroke-linecap="round"/><line x1="927.3" y1="350.3" x2="932.5" y2="345.3" stroke="#f2f2f3" stroke-width="1.1" stroke-dasharray="1.3 1.1"/><line x1="932.3" y1="343.90000000000003" x2="933.8" y2="345.40000000000003" stroke="#c8cacd" stroke-width="0.7" opacity="0.6"/><g fill="none" stroke="#e3c48f" stroke-width="1.2"><ellipse cx="354.0" cy="376.2" rx="3.9" ry="3.1"/><circle cx="354.0" cy="376.2" r="1.7"/></g><g fill="none" stroke="#e3c48f" stroke-width="1.2"><ellipse cx="450.2" cy="376.2" rx="3.9" ry="3.1"/><circle cx="450.2" cy="376.2" r="1.7"/></g><line x1="543.1" y1="379.2" x2="549.1" y2="373.40000000000003" stroke="#ab92d3" stroke-width="3.3" stroke-linecap="round"/><line x1="543.5" y1="378.8" x2="548.7" y2="373.8" stroke="#ece5f6" stroke-width="1.1" stroke-dasharray="1.3 1.1"/><line x1="548.5" y1="372.40000000000003" x2="550.0" y2="373.90000000000003" stroke="#ab92d3" stroke-width="0.7" opacity="0.6"/><g stroke="#df6a5c" stroke-width="1.25"><line x1="639.2" y1="373.3" x2="645.0" y2="379.2"/><line x1="645.0" y1="373.3" x2="639.2" y2="379.2"/></g><g stroke="#df6a5c" stroke-width="1.25"><line x1="735.1" y1="373.3" x2="740.9" y2="379.2"/><line x1="740.9" y1="373.3" x2="735.1" y2="379.2"/></g><g stroke="#df6a5c" stroke-width="1.25"><line x1="831.3" y1="373.3" x2="837.0999999999999" y2="379.2"/><line x1="837.0999999999999" y1="373.3" x2="831.3" y2="379.2"/></g><line x1="926.9" y1="379.2" x2="932.9" y2="373.40000000000003" stroke="#ab92d3" stroke-width="3.3" stroke-linecap="round"/><line x1="927.3" y1="378.8" x2="932.5" y2="373.8" stroke="#ece5f6" stroke-width="1.1" stroke-dasharray="1.3 1.1"/><line x1="932.3" y1="372.40000000000003" x2="933.8" y2="373.90000000000003" stroke="#ab92d3" stroke-width="0.7" opacity="0.6"/><line x1="352.1" y1="406.40000000000003" x2="355.9" y2="403.2" stroke="#6597d8" stroke-width="4" stroke-linecap="round"/><line x1="352.1" y1="406.40000000000003" x2="355.9" y2="403.2" stroke="#d3e2f5" stroke-width="1.7" stroke-linecap="round"/><line x1="448.3" y1="406.40000000000003" x2="452.09999999999997" y2="403.2" stroke="#6597d8" stroke-width="4" stroke-linecap="round"/><line x1="448.3" y1="406.40000000000003" x2="452.09999999999997" y2="403.2" stroke="#d3e2f5" stroke-width="1.7" stroke-linecap="round"/><line x1="543.1" y1="407.7" x2="549.1" y2="401.90000000000003" stroke="#ab92d3" stroke-width="3.3" stroke-linecap="round"/><line x1="543.5" y1="407.3" x2="548.7" y2="402.3" stroke="#ece5f6" stroke-width="1.1" stroke-dasharray="1.3 1.1"/><line x1="548.5" y1="400.90000000000003" x2="550.0" y2="402.40000000000003" stroke="#ab92d3" stroke-width="0.7" opacity="0.6"/><g stroke="#df6a5c" stroke-width="1.25"><line x1="639.2" y1="401.8" x2="645.0" y2="407.7"/><line x1="645.0" y1="401.8" x2="639.2" y2="407.7"/></g><g stroke="#df6a5c" stroke-width="1.25"><line x1="735.1" y1="401.8" x2="740.9" y2="407.7"/><line x1="740.9" y1="401.8" x2="735.1" y2="407.7"/></g><line x1="831.1999999999999" y1="407.7" x2="837.1999999999999" y2="401.90000000000003" stroke="#ab92d3" stroke-width="3.3" stroke-linecap="round"/><line x1="831.5999999999999" y1="407.3" x2="836.8" y2="402.3" stroke="#ece5f6" stroke-width="1.1" stroke-dasharray="1.3 1.1"/><line x1="836.5999999999999" y1="400.90000000000003" x2="838.0999999999999" y2="402.40000000000003" stroke="#ab92d3" stroke-width="0.7" opacity="0.6"/><line x1="926.9" y1="407.7" x2="932.9" y2="401.90000000000003" stroke="#ab92d3" stroke-width="3.3" stroke-linecap="round"/><line x1="927.3" y1="407.3" x2="932.5" y2="402.3" stroke="#ece5f6" stroke-width="1.1" stroke-dasharray="1.3 1.1"/><line x1="932.3" y1="400.90000000000003" x2="933.8" y2="402.40000000000003" stroke="#ab92d3" stroke-width="0.7" opacity="0.6"/><line x1="352.1" y1="434.90000000000003" x2="355.9" y2="431.7" stroke="#6597d8" stroke-width="4" stroke-linecap="round"/><line x1="352.1" y1="434.90000000000003" x2="355.9" y2="431.7" stroke="#d3e2f5" stroke-width="1.7" stroke-linecap="round"/><line x1="448.3" y1="434.90000000000003" x2="452.09999999999997" y2="431.7" stroke="#6597d8" stroke-width="4" stroke-linecap="round"/><line x1="448.3" y1="434.90000000000003" x2="452.09999999999997" y2="431.7" stroke="#d3e2f5" stroke-width="1.7" stroke-linecap="round"/><line x1="543.1" y1="436.2" x2="549.1" y2="430.40000000000003" stroke="#ab92d3" stroke-width="3.3" stroke-linecap="round"/><line x1="543.5" y1="435.8" x2="548.7" y2="430.8" stroke="#ece5f6" stroke-width="1.1" stroke-dasharray="1.3 1.1"/><line x1="548.5" y1="429.40000000000003" x2="550.0" y2="430.90000000000003" stroke="#ab92d3" stroke-width="0.7" opacity="0.6"/><g stroke="#df6a5c" stroke-width="1.25"><line x1="639.2" y1="430.3" x2="645.0" y2="436.2"/><line x1="645.0" y1="430.3" x2="639.2" y2="436.2"/></g><g stroke="#df6a5c" stroke-width="1.25"><line x1="735.1" y1="430.3" x2="740.9" y2="436.2"/><line x1="740.9" y1="430.3" x2="735.1" y2="436.2"/></g><line x1="831.1999999999999" y1="436.2" x2="837.1999999999999" y2="430.40000000000003" stroke="#ab92d3" stroke-width="3.3" stroke-linecap="round"/><line x1="831.5999999999999" y1="435.8" x2="836.8" y2="430.8" stroke="#ece5f6" stroke-width="1.1" stroke-dasharray="1.3 1.1"/><line x1="836.5999999999999" y1="429.40000000000003" x2="838.0999999999999" y2="430.90000000000003" stroke="#ab92d3" stroke-width="0.7" opacity="0.6"/><line x1="926.9" y1="436.2" x2="932.9" y2="430.40000000000003" stroke="#ab92d3" stroke-width="3.3" stroke-linecap="round"/><line x1="927.3" y1="435.8" x2="932.5" y2="430.8" stroke="#ece5f6" stroke-width="1.1" stroke-dasharray="1.3 1.1"/><line x1="932.3" y1="429.40000000000003" x2="933.8" y2="430.90000000000003" stroke="#ab92d3" stroke-width="0.7" opacity="0.6"/><line x1="352.1" y1="463.40000000000003" x2="355.9" y2="460.2" stroke="#6597d8" stroke-width="4" stroke-linecap="round"/><line x1="352.1" y1="463.40000000000003" x2="355.9" y2="460.2" stroke="#d3e2f5" stroke-width="1.7" stroke-linecap="round"/><line x1="448.3" y1="463.40000000000003" x2="452.09999999999997" y2="460.2" stroke="#6597d8" stroke-width="4" stroke-linecap="round"/><line x1="448.3" y1="463.40000000000003" x2="452.09999999999997" y2="460.2" stroke="#d3e2f5" stroke-width="1.7" stroke-linecap="round"/><line x1="543.1" y1="464.7" x2="549.1" y2="458.90000000000003" stroke="#ab92d3" stroke-width="3.3" stroke-linecap="round"/><line x1="543.5" y1="464.3" x2="548.7" y2="459.3" stroke="#ece5f6" stroke-width="1.1" stroke-dasharray="1.3 1.1"/><line x1="548.5" y1="457.90000000000003" x2="550.0" y2="459.40000000000003" stroke="#ab92d3" stroke-width="0.7" opacity="0.6"/><g stroke="#df6a5c" stroke-width="1.25"><line x1="639.2" y1="458.8" x2="645.0" y2="464.7"/><line x1="645.0" y1="458.8" x2="639.2" y2="464.7"/></g><g stroke="#df6a5c" stroke-width="1.25"><line x1="735.1" y1="458.8" x2="740.9" y2="464.7"/><line x1="740.9" y1="458.8" x2="735.1" y2="464.7"/></g><line x1="831.1999999999999" y1="464.7" x2="837.1999999999999" y2="458.90000000000003" stroke="#ab92d3" stroke-width="3.3" stroke-linecap="round"/><line x1="831.5999999999999" y1="464.3" x2="836.8" y2="459.3" stroke="#ece5f6" stroke-width="1.1" stroke-dasharray="1.3 1.1"/><line x1="836.5999999999999" y1="457.90000000000003" x2="838.0999999999999" y2="459.40000000000003" stroke="#ab92d3" stroke-width="0.7" opacity="0.6"/><line x1="926.9" y1="464.7" x2="932.9" y2="458.90000000000003" stroke="#ab92d3" stroke-width="3.3" stroke-linecap="round"/><line x1="927.3" y1="464.3" x2="932.5" y2="459.3" stroke="#ece5f6" stroke-width="1.1" stroke-dasharray="1.3 1.1"/><line x1="932.3" y1="457.90000000000003" x2="933.8" y2="459.40000000000003" stroke="#ab92d3" stroke-width="0.7" opacity="0.6"/></svg>
<div style="position:absolute;left:0px;top:476px;width:76px;height:1px;background:#2c2f33;"></div>
<div style="position:absolute;left:948px;top:476px;width:76px;height:1px;background:#2c2f33;"></div>
</body></html>
